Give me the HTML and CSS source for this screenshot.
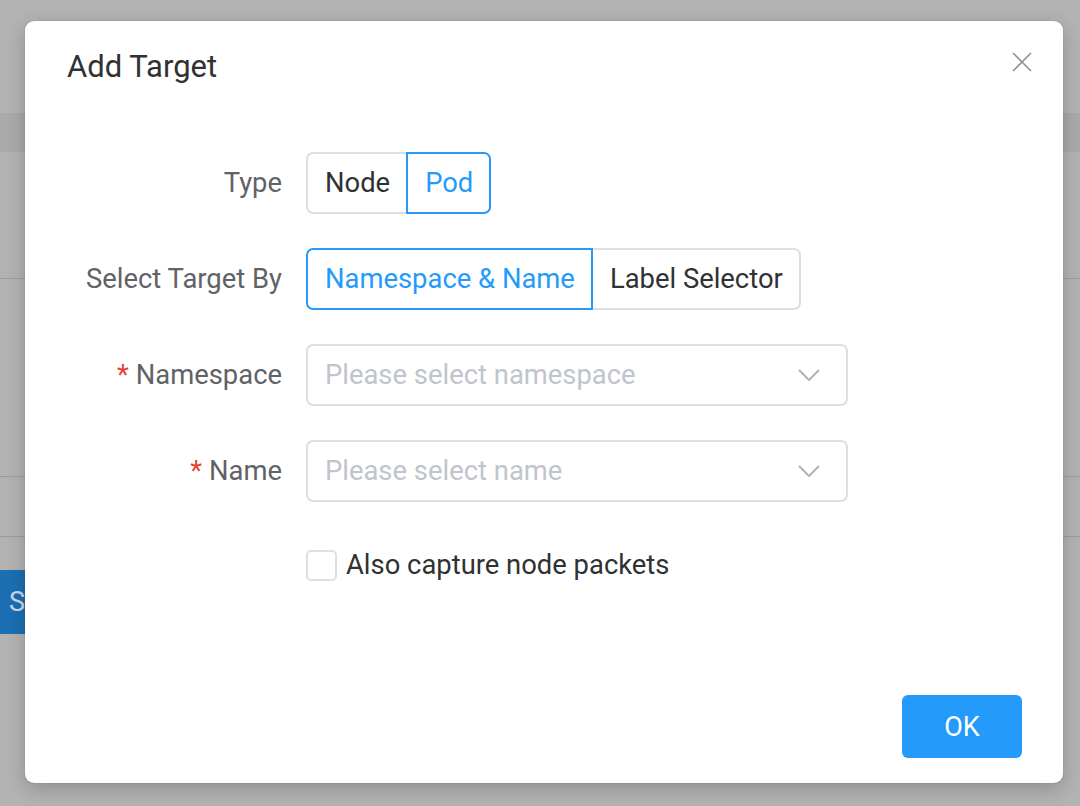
FILE: index.html
```html
<!DOCTYPE html>
<html>
<head>
<meta charset="utf-8">
<link rel="stylesheet" href="styles.css">
</head>
<body>
<div class="page">
  <div class="page-top"></div>
  <div class="page-band"></div>
  <div class="page-sec page-sec-a"></div>
  <div class="page-sec page-sec-b"></div>
  <div class="page-sec page-sec-c"></div>
  <div class="page-actions"><button class="page-btn">Start</button></div>
</div>

<div class="dialog">
  <div class="dialog-header">
    <h2 class="dialog-title">Add Target</h2>
    <svg class="dialog-close" width="20" height="20" viewBox="0 0 20 20"><path d="M1 1 L19 19 M19 1 L1 19" stroke="#909399" stroke-width="1.6" fill="none"/></svg>
  </div>
  <form class="form">
    <div class="form-row">
      <label class="form-label">Type</label>
      <div class="seg">
        <span class="seg-item">Node</span>
        <span class="seg-item active">Pod</span>
      </div>
    </div>
    <div class="form-row">
      <label class="form-label">Select Target By</label>
      <div class="seg">
        <span class="seg-item active">Namespace &amp; Name</span>
        <span class="seg-item">Label Selector</span>
      </div>
    </div>
    <div class="form-row">
      <label class="form-label"><span class="req">*</span>Namespace</label>
      <div class="select">
        <span class="placeholder">Please select namespace</span>
        <svg class="chev" width="22" height="12" viewBox="0 0 22 12"><path d="M1 1 L11 11 L21 1" stroke="#b0b3b8" stroke-width="2" fill="none"/></svg>
      </div>
    </div>
    <div class="form-row">
      <label class="form-label"><span class="req">*</span>Name</label>
      <div class="select">
        <span class="placeholder">Please select name</span>
        <svg class="chev" width="22" height="12" viewBox="0 0 22 12"><path d="M1 1 L11 11 L21 1" stroke="#b0b3b8" stroke-width="2" fill="none"/></svg>
      </div>
    </div>
    <div class="form-row check-row">
      <label class="form-label"></label>
      <label class="check"><span class="check-box"></span><span class="check-text">Also capture node packets</span></label>
    </div>
  </form>
  <div class="dialog-footer">
    <button class="ok-btn" type="button">OK</button>
  </div>
</div>
</body>
</html>
```

FILE: styles.css
```css
* { box-sizing: border-box; }
html, body { margin: 0; padding: 0; }
body {
  width: 1080px;
  height: 806px;
  overflow: hidden;
  background: #b3b3b3;
  font-family: Roboto, "Liberation Sans", sans-serif;
  position: relative;
}
.page { display: flex; flex-direction: column; }
.page-top { height: 113px; }
.page-band { height: 39px; background: #aaaaaa; }
.page-sec-a { height: 127px; border-bottom: 1px solid #9c9c9c; }
.page-sec-b { height: 198px; border-bottom: 1px solid #9c9c9c; }
.page-sec-c { height: 60px; border-bottom: 1px solid #9c9c9c; }
.page-actions { padding-top: 33px; }
.page-btn {
  border: 0;
  background: #1c6fb2;
  color: #c9d9e8;
  height: 64px;
  width: 120px;
  text-align: left;
  padding-left: 9px;
  font-family: Roboto, "Liberation Sans", sans-serif;
  font-size: 27px;
}

.dialog {
  position: absolute;
  left: 25px;
  top: 21px;
  width: 1038px;
  height: 762px;
  background: #fff;
  border-radius: 9px;
  box-shadow: 0 6px 20px rgba(0,0,0,0.2), 0 0 2px rgba(0,0,0,0.15);
  display: flex;
  flex-direction: column;
}
.dialog-header {
  display: flex;
  justify-content: space-between;
  align-items: flex-start;
  padding: 26px 31px 0 42px;
}
.dialog-title {
  margin: 0;
  font-weight: 400;
  font-size: 31px;
  line-height: 40px;
  color: #303133;
}
.dialog-close { margin-top: 5px; }

.form {
  display: flex;
  flex-direction: column;
  gap: 34px;
  padding-top: 65px;
}
.form-row {
  display: flex;
  align-items: center;
  height: 62px;
}
.form-label {
  width: 281px;
  padding-right: 24px;
  text-align: right;
  font-size: 27.4px;
  color: #606266;
  flex: none;
}
.req { color: #e0442f; margin-right: 7px; }

.seg { display: flex; height: 62px; }
.seg-item {
  display: flex;
  align-items: center;
  padding: 0 16px 0 17px;
  font-size: 27.4px;
  color: #303133;
  border: 2px solid #dcdfe6;
  margin-left: -2px;
  position: relative;
}
.seg-item:first-child { margin-left: 0; border-radius: 7px 0 0 7px; }
.seg-item:last-child { border-radius: 0 7px 7px 0; }
.seg-item.active { border-color: #249bfa; color: #249bfa; z-index: 1; }

.select {
  width: 542px;
  height: 62px;
  border: 2px solid #dcdfe6;
  border-radius: 7px;
  display: flex;
  align-items: center;
  justify-content: space-between;
  padding: 0 26px 0 17px;
}
.placeholder { font-size: 27.4px; color: #c0c4cc; }

.check { display: flex; align-items: center; margin-top: -4px; }
.check-box {
  width: 31px;
  height: 31px;
  border: 2px solid #dcdfe6;
  border-radius: 5px;
  margin-right: 9px;
}
.check-text { font-size: 27.4px; color: #303133; }

.dialog-footer {
  margin-top: auto;
  display: flex;
  justify-content: flex-end;
  padding: 0 41px 25px 0;
}
.ok-btn {
  width: 120px;
  height: 63px;
  border: 0;
  border-radius: 6px;
  background: #249bfa;
  color: #fff;
  font-family: Roboto, "Liberation Sans", sans-serif;
  font-size: 27px;
}
```
